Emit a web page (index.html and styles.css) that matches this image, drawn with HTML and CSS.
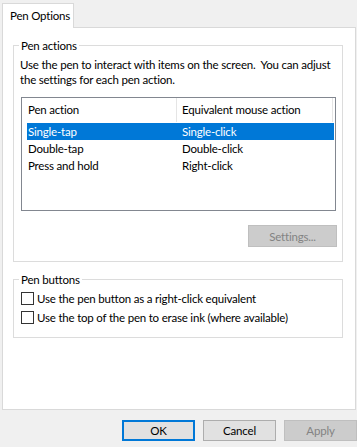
FILE: index.html
```html
<!DOCTYPE html>
<html lang="en">
<head>
    <meta charset="UTF-8">
    <title>Pen Options</title>
    <link rel="stylesheet" href="styles.css">
</head>
<body>
    <div class="dialog">
        <div class="tabs">
            <div class="tab">Pen Options</div>
        </div>

        <div class="panel">
            <fieldset class="group group-actions">
                <legend>Pen actions</legend>
                <p class="intro">Use the pen to interact with items on the screen.&nbsp; You can adjust the settings for each pen action.</p>

                <div class="list">
                    <div class="list-head">
                        <div class="col col-1">Pen action</div>
                        <div class="col col-2">Equivalent mouse action</div>
                    </div>
                    <div class="row selected">
                        <div class="col col-1">Single-tap</div>
                        <div class="col col-2">Single-click</div>
                    </div>
                    <div class="row">
                        <div class="col col-1">Double-tap</div>
                        <div class="col col-2">Double-click</div>
                    </div>
                    <div class="row">
                        <div class="col col-1">Press and hold</div>
                        <div class="col col-2">Right-click</div>
                    </div>
                </div>

                <div class="group-foot">
                    <button class="btn btn-settings" disabled>Settings...</button>
                </div>
            </fieldset>

            <fieldset class="group group-buttons">
                <legend>Pen buttons</legend>
                <label class="check"><span class="box"></span>Use the pen button as a right-click equivalent</label>
                <label class="check"><span class="box"></span>Use the top of the pen to erase ink (where available)</label>
            </fieldset>
        </div>

        <div class="actions">
            <button class="btn btn-default">OK</button>
            <button class="btn">Cancel</button>
            <button class="btn" disabled>Apply</button>
        </div>
    </div>
</body>
</html>
```

FILE: styles.css
```css
body { margin: 0; background: #f0f0f0; font-family: Lato, "Noto Sans", sans-serif; font-size: 11.5px; letter-spacing: -0.2px; color: #000; }
.dialog { width: 357px; height: 447px; padding: 3px 0 0 2px; box-sizing: border-box; }

.tabs { display: flex; position: relative; z-index: 1; }
.tab { width: 63px; height: 24px; line-height: 24px; padding-left: 7px; background: #fff; border: 1px solid #d9d9d9; border-bottom: none; }

.panel { width: 354px; height: 383px; box-sizing: border-box; background: #fff; border: 1px solid #d9d9d9; margin-top: -1px; padding: 10px 12px 0 10px; }

.group { margin: 0; padding: 0 6px 14px 7px; border: 1px solid #dcdcdc; }
.group legend { padding: 0 2px; margin-left: -2px; line-height: 15px; }
.group-buttons { margin-top: 10px; padding-bottom: 10px; }

.intro { margin: 4px 0 0 -1px; line-height: 15px; }

.list { margin-top: 10px; height: 114px; box-sizing: border-box; border: 1px solid #828790; padding-right: 1px; }
.list-head { display: flex; height: 24px; line-height: 24px; margin-bottom: 1px; }
.list-head .col-1 { border-right: 1px solid #e5e5e5; }
.list-head .col-2 { border-right: 1px solid #e5e5e5; }
.col { box-sizing: border-box; white-space: nowrap; }
.col-1 { width: 155px; padding-left: 6px; }
.col-2 { width: 156px; padding-left: 5px; }
.row { display: flex; height: 17px; line-height: 17px; margin-left: 5px; }
.row .col-1 { width: 150px; padding-left: 1px; }
.selected { background: #0078d7; color: #fff; }

.group-foot { display: flex; justify-content: flex-end; margin-top: 14px; margin-right: -1px; }

.btn { font: inherit; letter-spacing: inherit; width: 74px; height: 21px; padding: 0; background: #e1e1e1; border: 1px solid #adadad; color: #000; }
.btn:disabled { background: #cccccc; border-color: #bfbfbf; color: #838383; }
.btn-settings { width: 89px; height: 22px; border-color: #cccccc; }
.btn-default { border: 2px solid #0078d7; }

.check { display: flex; align-items: center; height: 19px; }
.check:first-of-type { margin-top: 2px; }
.box { width: 11px; height: 11px; border: 1px solid #333; background: #fff; margin-right: 3px; }

.actions { display: flex; gap: 8px; margin: 10px 0 0 120px; }
```
